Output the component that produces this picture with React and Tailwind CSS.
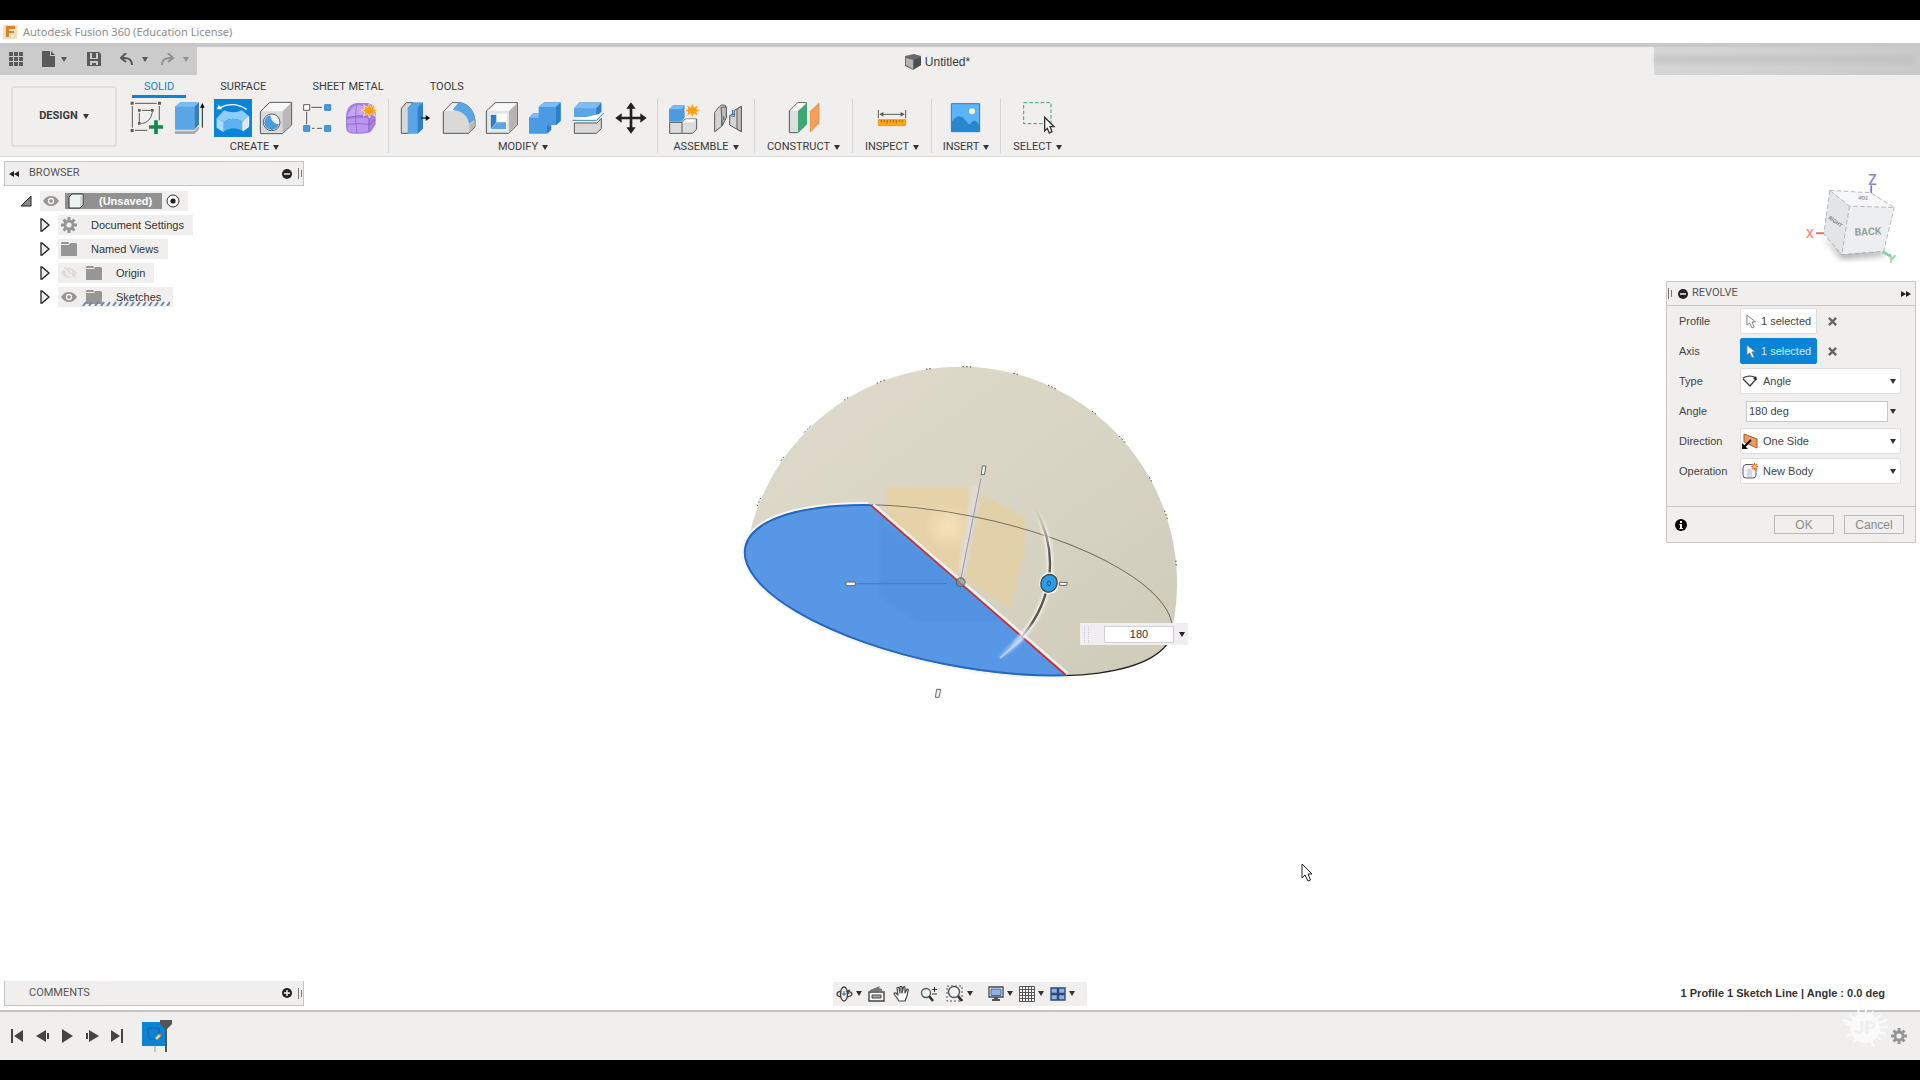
import React, { useState } from 'react'

const Caret = ({ className = 'fill-[#333]' }) => (
  <svg viewBox="0 0 6 5" className={`h-[5px] w-[6px] shrink-0 ${className}`}>
    <path d="M0 0H6L3 5Z" />
  </svg>
)

const star = 'M79 12L84 25L97 17L92 30L104 34L92 39L97 52L84 44L79 57L74 44L61 52L66 39L54 34L66 30L61 17L74 25Z'
const dark = '#5a5a5a'

const icons = {
  sketch: (
    <g fill="none" stroke={dark} strokeWidth="3">
      <path d="M21 13H86M13 21V86M94 21V64M21 94H58" />
      <path d="M34 42V70M42 34H70M73 40Q68 70 40 74" />
      <path fill={dark} stroke="none" d="M8 8h9v9H8zM90 8h9v9h-9zM8 90h9v9H8zM30 30h8v8h-8zM69 30h8v8h-8zM30 69h8v8h-8z" />
      <path stroke="#128a4b" strokeWidth="11" d="M84 64V105M63 84H105" />
    </g>
  ),
  extrude: (
    <g>
      <path fill="#a9a9a9" d="M12 96L68 96L84 80V91L70 105H12Z" />
      <path fill="#e0e0e0" d="M12 93H68L84 77V82L69 97H12Z" />
      <path fill="#5aa5e6" d="M12 23L28 10H84L70 23V92H12Z" />
      <path fill="#7bbcf5" d="M12 23L28 10H84L70 23Z" />
      <path fill="#2f7fc6" d="M70 23L84 10V76L70 92Z" />
      <path stroke="#222" strokeWidth="3" d="M94 86V22" />
      <path d="M94 12L101 26H87Z" />
    </g>
  ),
  revolve: (
    <g>
      <path fill="#0a84d6" d="M0 0H114V114H0Z" />
      <path fill="#8dccfb" d="M8 58L30 34Q57 46 84 34L105 52L87 68Q57 50 28 68Z" />
      <path fill="#5fb2f2" d="M8 58L28 68Q57 50 87 68V96Q57 78 28 99L8 86Z" />
      <path fill="#a9dbff" d="M8 58L28 68V99L8 86Z" />
      <path fill="#dfe8ee" stroke="#fff" strokeWidth="3" d="M87 70L104 53V83L87 96Z" />
      <path fill="none" stroke="#fff" strokeWidth="4" d="M98 31Q58 5 16 27" />
      <path fill="#fff" d="M8 31L14 17L25 31Z" />
    </g>
  ),
  hole: (
    <g>
      <path fill="#d9d9d9" stroke={dark} strokeWidth="3" strokeLinejoin="round" d="M10 38L38 10H104V78L76 104H10Z" />
      <path fill="#f7f7f7" d="M14 37L39 12H101L76 37Z" />
      <path fill="#b9b9b9" d="M77 38L102 13V77L77 102Z" />
      <circle cx="44" cy="70" r="25" fill="#f8f8f8" stroke={dark} strokeWidth="3" />
      <path fill="#4b9be2" d="M40 49A22 22 0 1 0 65 76Q44 74 40 49Z" />
    </g>
  ),
  pattern: (
    <g stroke={dark} strokeWidth="3">
      <path d="M34 25H66M20 38V76M36 88H44M51 88H66" />
      <path fill="#fff" d="M11 17H29V34H11Z" />
      <path fill="#4b9be2" stroke="#3187d4" d="M74 17H92V34H74ZM11 80H29V97H11ZM74 80H92V97H74Z" />
    </g>
  ),
  form: (
    <g>
      <path fill="#a77fe0" d="M9 56Q9 18 40 12H78Q98 20 98 48V76L84 98Q70 105 30 104Q9 103 9 84Z" />
      <path fill="#c5a5f2" d="M13 52Q20 26 44 18L78 24L74 46Q44 50 13 54Z" />
      <path fill="#bb98ee" d="M12 62Q44 55 74 58L76 96Q40 106 16 96Z" />
      <path fill="none" stroke="#7f5cc0" strokeWidth="2" d="M10 56Q44 46 78 54L98 38M42 16Q34 50 42 104M78 50V98M12 76Q44 72 78 76L98 62" />
      <path fill="#ff9f0a" stroke="#f0efee" strokeWidth="2" d={star} />
    </g>
  ),
  pressPull: (
    <g>
      <path fill="#d7d7d7" stroke={dark} strokeWidth="3" d="M13 28L28 11H48L34 28V103H13Z" />
      <path fill="#5aa5e6" d="M33 25L50 10H78V88L62 104H33Z" />
      <path fill="#2f7fc6" d="M62 25L78 10V88L62 104Z" />
      <path stroke="#222" strokeWidth="4" d="M72 57H90" />
      <path d="M99 57L86 48V66Z" />
    </g>
  ),
  fillet: (
    <g>
      <path fill="#d9d9d9" stroke={dark} strokeWidth="3" d="M10 38L36 11H62Q100 20 105 64V84L86 103H10Z" />
      <path fill="#f4f4f4" d="M14 36L37 13H57L42 36Z" />
      <path fill="#5aa5e6" d="M38 32L56 10Q101 18 105 62L87 74Q82 38 38 32Z" />
      <path fill="#b9b9b9" d="M88 76L104 66V83L88 101Z" />
    </g>
  ),
  shell: (
    <g>
      <path fill="#e4e4e4" stroke={dark} strokeWidth="3" d="M10 36L37 11H103V78L77 103H10Z" />
      <path fill="#f8f8f8" d="M14 35L38 13H100L76 35Z" />
      <path fill="#b5b5b5" d="M78 37L102 14V77L78 101Z" />
      <path fill="#fff" d="M20 44H72V94H20Z" />
      <path fill="#2f7fc6" d="M23 47H40V70L23 91Z" />
      <path fill="#5aa5e6" d="M41 70H69V91H24Z" />
    </g>
  ),
  combine: (
    <g>
      <path fill="#4b9be2" d="M9 56L21 43H38V24L54 10H104V66L91 78H76V92L64 104H9Z" />
      <path fill="#7bbcf5" d="M39 24L54 11H103L90 24ZM10 56L21 44H38V56Z" />
      <path fill="#2f7fc6" d="M90 24L104 11V66L90 78ZM63 80H75V92L63 103Z" />
    </g>
  ),
  split: (
    <g>
      <path fill="#5aa5e6" d="M15 28L31 10H97V38L82 54H15Z" />
      <path fill="#7bbcf5" d="M16 28L31 11H96L82 28Z" />
      <path fill="#2f7fc6" d="M82 28L97 11V37L82 53Z" />
      <path fill="#fff" stroke="#3187d4" strokeWidth="3" d="M10 64H83L104 42" />
      <path fill="#d9d9d9" stroke={dark} strokeWidth="3" d="M16 72H84L97 58V89L82 103H16Z" />
    </g>
  ),
  move: (
    <g fill="#222">
      <path d="M53 26h8v62h-8zM26 53h62v8H26z" />
      <path d="M57 10L71 29H43ZM57 104L71 85H43ZM10 57L29 43V71ZM104 57L85 43V71Z" />
    </g>
  ),
  component: (
    <g>
      <path fill="#dcdcdc" stroke={dark} strokeWidth="3" d="M11 70H48L58 60H92V90L80 103H11ZM48 70V103" />
      <path fill="#fff" d="M50 70L60 61H90L80 70Z" />
      <path fill="#4b9be2" d="M9 31L21 19H56V56L46 68H9Z" />
      <path fill="#7bbcf5" d="M10 31L21 20H55L46 31Z" />
      <path fill="#ff9f0a" stroke="#f0efee" strokeWidth="2" d={star} />
    </g>
  ),
  joint: (
    <g fill="#d4d4d4" stroke={dark} strokeWidth="3">
      <path d="M17 40L32 22Q38 14 50 20L53 54L38 62V82L17 98Z" />
      <path fill="#bdbdbd" d="M36 25L40 80L52 56V24Z" />
      <path d="M97 22L76 34V52L62 50V78L72 84L97 98Z" />
      <path fill="#c2c2c2" d="M84 30L97 22V98L84 90Z" />
      <path stroke="#2f7fc6" strokeWidth="4" d="M44 52V64M71 32V48M65 46H76" />
    </g>
  ),
  construct: (
    <g>
      <path fill="#dedede" stroke={dark} strokeWidth="3" d="M13 36L38 11H64V76L38 101H13Z" />
      <path fill="#f8f8f8" d="M16 35L39 13H62L38 35Z" />
      <path fill="#3ba874" d="M39 37L66 12V74L39 101Z" />
      <path fill="#f2a05c" stroke="#d98238" strokeWidth="2" d="M76 37L102 12V73L76 99Z" />
    </g>
  ),
  inspect: (
    <g>
      <path stroke={dark} strokeWidth="3" d="M16 33V58M98 33V58M22 46H92" />
      <path fill={dark} d="M19 46L31 39V53ZM95 46L83 39V53Z" />
      <path fill="#ffa51e" stroke="#e08a00" strokeWidth="2" d="M16 62H98V80H16Z" />
      <path stroke="#7a4a00" strokeWidth="2" d="M25 63V70M34 63V70M43 63V73M52 63V70M61 63V70M70 63V73M79 63V70M88 63V70" />
    </g>
  ),
  insert: (
    <g>
      <path fill="#5cb4f8" stroke="#2a7dc2" strokeWidth="3" d="M13 14H98V98H13Z" />
      <path fill="#2a86cc" d="M14 68Q38 34 60 70Q66 80 72 72Q84 56 97 78V97H14Z" />
      <circle cx="75" cy="37" r="9" fill="#f7f4cf" />
    </g>
  ),
  select: (
    <g>
      <path fill="none" stroke="#3ba874" strokeWidth="3" strokeDasharray="11 6" d="M14 11H96V74H14Z" />
      <path fill="#fff" stroke="#333" strokeWidth="4" d="M77 55L105 83H93L99 98L91 102L85 88L77 96Z" />
    </g>
  ),
}

const groups = [
  { label: 'CREATE', width: 'w-[265px] border-r pr-[3px]', tools: ['sketch', 'extrude', 'revolve', 'hole', 'pattern', 'form'] },
  { label: 'MODIFY', width: 'w-[269px] border-r', tools: ['pressPull', 'fillet', 'shell', 'combine', 'split', 'move'] },
  { label: 'ASSEMBLE', width: 'w-[97px] border-r', tools: ['component', 'joint'] },
  { label: 'CONSTRUCT', width: 'w-[98px] border-r', tools: ['construct'] },
  { label: 'INSPECT', width: 'w-[79px] border-r', tools: ['inspect'] },
  { label: 'INSERT', width: 'w-[69px] border-r', tools: ['insert'] },
  { label: 'SELECT', width: 'w-[73px]', tools: ['select'] },
]

const Gear = ({ className }) => (
  <svg viewBox="0 0 16 16" className={className}>
    <g stroke="currentColor" strokeWidth="3">
      <path d="M8 0V16M0 8H16M2.5 2.5L13.5 13.5M13.5 2.5L2.5 13.5" />
    </g>
    <circle cx="8" cy="8" r="5.5" fill="currentColor" />
    <circle cx="8" cy="8" r="2.6" fill="#f0efee" />
  </svg>
)

const Folder = () => (
  <svg viewBox="0 0 16 14" className="h-[14px] w-4 fill-[#969696]">
    <path d="M0 1Q0 0 1 0H7L8 1V2H0ZM0 3H8L9 1H15L16 2V14H0Z" />
  </svg>
)

const Eye = ({ off }) => (
  <svg viewBox="0 0 16 12" className={`h-3 w-4 ${off ? 'text-[#dcdcdc]' : 'text-[#969696]'}`}>
    <path fill="currentColor" d="M0 6Q3 1 8 1T16 6Q13 11 8 11T0 6Z" />
    <circle cx="8" cy="6" r="3.2" fill="#f0efee" />
    <circle cx="8" cy="6" r="1.8" fill="currentColor" />
    {off && <path stroke="#f0efee" strokeWidth="1.5" d="M1 0L14 12" />}
    {off && <path stroke="currentColor" strokeWidth="1.5" d="M3 0L15 11" />}
  </svg>
)

const Expand = () => (
  <button aria-label="Expand" className="w-[18px]">
    <svg viewBox="0 0 10 14" className="h-[14px] w-[10px]">
      <path fill="#eee" stroke="#222" strokeWidth="1.3" d="M1 1H2L9 7L2 13H1Z" />
    </svg>
  </button>
)

const Dot = ({ plus, className = '' }) => (
  <svg viewBox="0 0 10 10" className={`h-[10px] w-[10px] ${className}`}>
    <circle cx="5" cy="5" r="5" fill="#222" />
    <path stroke="#fff" strokeWidth="1.4" d={plus ? 'M2 5H8M5 2V8' : 'M2 5H8'} />
  </svg>
)

const Grip = () => (
  <span className="flex gap-[2px]">
    <i className="h-[11px] w-px bg-[#777]" />
    <i className="h-[7px] w-px self-center bg-[#777]" />
  </span>
)

function TitleBar() {
  return (
    <div className="flex h-[23px] items-center gap-[6px] bg-white pl-[3px]">
      <svg viewBox="0 0 14 14" className="h-[14px] w-[14px]">
        <path fill="#fbdcb4" d="M0 0H14V14H0Z" />
        <path fill="#d9822b" d="M3 1H12V4H6V6H11V8H6V12H3Z" />
        <path fill="#fff" d="M8 10H11V12H8Z" />
      </svg>
      <span className="pt-px font-['Noto_Sans','Open_Sans',sans-serif] text-[11px] text-[#8d8d8d]">Autodesk Fusion 360 (Education License)</span>
    </div>
  )
}

function QuickAccess() {
  return (
    <div className="flex h-7 w-[197px] items-center bg-[#cbcbcb] pb-1 pl-[9px] text-[#5a5a5a]">
      <button aria-label="Data panel">
        <svg viewBox="0 0 14 14" className="h-[14px] w-[14px] fill-current">
          <path d="M0 0h4v4H0zM5 0h4v4H5zM10 0h4v4h-4zM0 5h4v4H0zM5 5h4v4H5zM10 5h4v4h-4zM0 10h4v4H0zM5 10h4v4H5zM10 10h4v4h-4z" />
        </svg>
      </button>
      <button aria-label="File" className="ml-[19px] flex items-center gap-[6px]">
        <svg viewBox="0 0 13 16" className="h-4 w-[13px] fill-current"><path d="M0 0H8V5H13V16H0ZM9 0L13 4H9Z" /></svg>
        <Caret className="fill-[#5a5a5a]" />
      </button>
      <button aria-label="Save" className="ml-5">
        <svg viewBox="0 0 14 14" className="h-[14px] w-[14px]">
          <path fill="currentColor" d="M0 0H12L14 2V14H0Z" />
          <path fill="#cbcbcb" d="M3 1H5V6H9V1H11V7H3ZM3 9H11V13H9V11H5V13H3Z" />
        </svg>
      </button>
      <button aria-label="Undo" className="ml-[19px] flex items-center gap-[9px]">
        <svg viewBox="0 0 13 12" className="h-3 w-[13px]">
          <path fill="none" stroke="currentColor" strokeWidth="2" d="M6 0L1 5L6 9M2 5Q12 4 12 12" />
        </svg>
        <Caret className="fill-[#5a5a5a]" />
      </button>
      <button aria-label="Redo" className="ml-[13px] flex items-center gap-[9px] text-[#919191]">
        <svg viewBox="0 0 13 12" className="h-3 w-[13px]">
          <path fill="none" stroke="currentColor" strokeWidth="2" d="M7 0L12 5L7 9M11 5Q1 4 1 12" />
        </svg>
        <Caret className="fill-[#919191]" />
      </button>
    </div>
  )
}

function Toolbar() {
  const [tab, setTab] = useState('SOLID')

  return (
    <header className="border-t-4 border-b border-t-[#c8c8c8] border-b-[#dcdcdc] bg-[#f0efee] text-[#3a3a3a]">
      <div className="flex">
        <QuickAccess />
        <div className="flex flex-1 items-center justify-center gap-1 pt-px pl-6 text-[12px]">
          <svg viewBox="0 0 16 16" className="h-4 w-4">
            <path fill="#6a6a6a" d="M0 2L9 0L16 2V11L8 16L0 12Z" />
            <path fill="#b4b4b4" d="M1 4L8 6V15L1 11Z" />
            <path fill="#4c4c4c" d="M9 6L16 3V11L9 15Z" />
          </svg>
          <span>Untitled*</span>
        </div>
        <div className="h-7 w-[266px] bg-gradient-to-r from-[#d6d6d6] to-[#c9c9c9] pt-2 pr-1">
          <div className="h-[9px] bg-[#c0c0c0] opacity-60 blur-[2px]" />
        </div>
      </div>

      <div className="flex pb-[3px] pl-[11px]">
        <button className="mt-[11px] mr-[7px] flex h-[61px] w-[106px] items-center justify-center gap-[5px] rounded border-2 border-[#dedede] font-['Roboto',sans-serif] text-[11px] font-bold">
          DESIGN <Caret />
        </button>
        <div>
          <nav className="flex gap-[22px] pl-2 font-['Roboto',sans-serif] text-[11px] leading-4">
            {['SOLID', 'SURFACE', 'SHEET METAL', 'TOOLS'].map((t) => (
              <button
                key={t}
                onClick={() => setTab(t)}
                className={`border-b-[3px] px-3 pt-1 ${tab === t ? 'border-[#0a84d6] text-[#0a84d6]' : 'border-transparent'}`}
              >
                {t}
              </button>
            ))}
          </nav>
          <div className="mt-px flex">
            {groups.map((g) => (
              <div key={g.label} className={`flex h-[54px] flex-col items-center border-[#d4d4d4] ${g.width}`}>
                <div className="flex gap-[5px]">
                  {g.tools.map((t) => (
                    <button key={t} aria-label={t}>
                      <svg viewBox="0 0 114 114" className="h-[38px] w-[38px]">{icons[t]}</svg>
                    </button>
                  ))}
                </div>
                <button className="mt-[2px] flex items-center gap-1 font-['Roboto',sans-serif] text-[11px] leading-4">
                  {g.label} <Caret />
                </button>
              </div>
            ))}
          </div>
        </div>
      </div>
    </header>
  )
}

function Browser() {
  return (
    <aside className="w-[300px] text-[11px] text-[#333]">
      <div className="flex h-[25px] items-center border border-[#c4c4c4] bg-[#f0efee] pr-px pl-1 font-['Roboto',sans-serif] text-[#555]">
        <svg viewBox="0 0 10 6" className="h-[6px] w-[10px] fill-[#222]"><path d="M5 0V6L0 3ZM10 0V6L5 3Z" /></svg>
        <span className="ml-[10px] flex-1">BROWSER</span>
        <Dot className="mr-[6px]" />
        <Grip />
      </div>

      <ul className="mt-[5px] flex flex-col gap-1 pl-9">
        <li className="-ml-5 flex h-5 items-center">
          <svg viewBox="0 0 12 12" className="mr-2 h-3 w-3"><path fill="#888" stroke="#222" d="M11 1V11H1Z" /></svg>
          <div className="flex h-5 items-center bg-[#f0efee] pr-2 pl-[3px]">
            <Eye />
            <div className="ml-[6px] flex h-4 items-center bg-[#919191] pr-[10px] pl-[3px] font-bold text-white">
              <svg viewBox="0 0 16 16" className="mr-[15px] h-4 w-4">
                <path fill="#eef2f3" stroke="#333" d="M1 4L4 1H15V12L12 15H1Z" />
                <path fill="#cfd6d9" d="M12 4L14.5 1.5V12L12 14.5Z" />
              </svg>
              (Unsaved)
            </div>
            <svg viewBox="0 0 14 14" className="ml-1 h-[14px] w-[14px]">
              <circle cx="7" cy="7" r="6" fill="#fff" stroke="#333" />
              <circle cx="7" cy="7" r="2.6" fill="#222" />
            </svg>
          </div>
        </li>
        <li className="flex h-5 items-center">
          <Expand />
          <div className="flex h-5 items-center bg-[#f0efee] pr-[9px] pl-[3px]">
            <Gear className="h-4 w-4 text-[#969696]" />
            <span className="ml-[14px]">Document Settings</span>
          </div>
        </li>
        <li className="flex h-5 items-center">
          <Expand />
          <div className="flex h-5 items-center bg-[#f0efee] pr-[9px] pl-[3px]">
            <Folder />
            <span className="ml-[14px]">Named Views</span>
          </div>
        </li>
        <li className="flex h-5 items-center">
          <Expand />
          <div className="flex h-5 items-center bg-[#f0efee] pr-[9px] pl-[3px]">
            <Eye off />
            <span className="w-[9px]" />
            <Folder />
            <span className="ml-[14px]">Origin</span>
          </div>
        </li>
        <li className="flex h-5 items-center">
          <Expand />
          <div className="relative flex h-5 items-center bg-[#f0efee] pr-3 pl-[3px]">
            <Eye />
            <span className="w-[9px]" />
            <Folder />
            <span className="ml-[14px]">Sketches</span>
            <svg viewBox="0 0 88 5" className="absolute bottom-px left-6 h-[5px] w-[88px]">
              <path
                stroke="#6f86a4"
                strokeWidth="2"
                d="M1 5L4 1M7 5L10 1M13 5L16 1M19 5L22 1M25 5L28 1M31 5L34 1M37 5L40 1M43 5L46 1M49 5L52 1M55 5L58 1M61 5L64 1M67 5L70 1M73 5L76 1M79 5L82 1M85 5L88 1"
              />
            </svg>
          </div>
        </li>
      </ul>
    </aside>
  )
}

function ViewCube() {
  return (
    <svg viewBox="490 30 290 290" className="mt-[13px] mr-5 h-[97px] w-[97px] self-end">
      <defs>
        <filter id="cubeShadow"><feGaussianBlur stdDeviation="9" /></filter>
      </defs>
      <path fill="#777" opacity=".6" filter="url(#cubeShadow)" d="M550 230L606 296L730 286L735 270L606 270Z" />
      <path stroke="#7b6fd6" strokeWidth="5" d="M694 76V100" />
      <path stroke="#f26d63" strokeWidth="6" d="M529 219H556" />
      <path stroke="#7fd49b" strokeWidth="8" d="M728 274L752 288" />
      <path fill="#f6f7f8" d="M570 91L692 98L763 142L629 138Z" />
      <path fill="#e3e5e7" d="M570 91L629 138L606 283L552 221Z" />
      <path fill="#eceef0" d="M629 138L763 142L731 273L606 283Z" />
      <path
        fill="none"
        stroke="#9a9a9a"
        strokeWidth="2"
        strokeDasharray="14 7"
        d="M570 91L692 98L763 142L629 138ZM570 91L552 221L606 283L731 273L763 142M629 138L606 283"
      />
      <g fontFamily="Roboto, sans-serif">
        <text x="644" y="225" fontSize="31" fontWeight="700" fill="#98a19f" transform="rotate(-3 682 212)">BACK</text>
        <text x="565" y="175" fontSize="16" fontWeight="700" fill="#7d8587" transform="rotate(36 565 175)">RIGHT</text>
        <text x="686" y="108" fontSize="16" fontWeight="700" fill="#8d9494" transform="rotate(184 686 108)">TOP</text>
        <text x="498" y="234" fontSize="40" fontWeight="500" fill="#f2938b">X</text>
        <text x="685" y="74" fontSize="42" fontWeight="500" fill="#8f84dc">Z</text>
        <text x="744" y="308" fontSize="36" fontWeight="500" fill="#7fd49b" transform="rotate(14 756 296)">Y</text>
      </g>
    </svg>
  )
}

const Pointer = ({ fill }) => (
  <svg viewBox="0 0 12 16" className="h-[15px] w-[11px]">
    <path fill={fill} stroke="#777" d="M1 1V12L4 9.5L6.5 15L9 14L6.5 8.5H10.5Z" />
  </svg>
)

const typeIcon = (
  <svg viewBox="0 0 16 12" className="h-3 w-4">
    <path fill="none" stroke="#333" strokeWidth="1.2" d="M1 4L8 11L14 4M1 3Q8 -1 14 3" />
    <path fill="#222" d="M15 5L11 4L14 1Z" />
  </svg>
)

const directionIcon = (
  <svg viewBox="0 0 16 16" className="h-4 w-4">
    <path fill="#f09a5e" stroke="#a85a24" d="M2 1L15 6V15L2 9Z" />
    <path stroke="#000" strokeWidth="1.8" d="M2 14L9 7" />
    <path d="M0 16V10L6 16Z" />
  </svg>
)

const operationIcon = (
  <svg viewBox="0 0 16 16" className="h-4 w-4">
    <path fill="#f5f7fb" stroke="#555b6b" d="M1 5Q1 2 4 1.5H11L14 5V12Q14 15 11 15H4Q1 15 1 12Z" />
    <path fill="#d4d9e4" d="M5 6H10V14H5Z" />
    <path stroke="#e0661a" strokeWidth="1.2" d="M12.5 0V7M9 3.5H16M10 1L15 6M15 1L10 6" />
    <circle cx="12.5" cy="3.5" r="1.5" fill="#ffd34d" />
  </svg>
)

function SelectRow({ id, label, icon, options }) {
  return (
    <div className="flex h-[30px] items-center">
      <label htmlFor={id} className="w-[61px]">{label}</label>
      <div className="relative h-[26px] w-[161px]">
        <select id={id} className="h-full w-full appearance-none rounded-xs border border-[#dedede] bg-white pl-[22px]">
          {options.map((o) => <option key={o}>{o}</option>)}
        </select>
        <span className="pointer-events-none absolute inset-y-0 left-[2px] flex items-center">{icon}</span>
        <span className="pointer-events-none absolute inset-y-0 right-[5px] flex items-center"><Caret /></span>
      </div>
    </div>
  )
}

function RevolvePanel() {
  const [angle, setAngle] = useState('180 deg')

  return (
    <section className="mt-[14px] mr-1 w-[250px] border border-[#c8c8c8] bg-[#f0efee] text-[11px] text-[#444]">
      <div className="flex h-6 items-center border-b border-[#c8c8c8] pr-1 pl-px font-['Roboto',sans-serif] text-[#555]">
        <Grip />
        <Dot className="ml-[6px]" />
        <span className="ml-1 flex-1">REVOLVE</span>
        <svg viewBox="0 0 10 6" className="h-[6px] w-[10px] fill-[#222]"><path d="M0 0V6L5 3ZM5 0V6L10 3Z" /></svg>
      </div>

      <div className="pb-5 pl-3">
        {['Profile', 'Axis'].map((name) => {
          const active = name === 'Axis'
          return (
            <div key={name} className="flex h-[30px] items-center">
              <span className="w-[61px]">{name}</span>
              <button className={`flex h-[26px] w-[77px] items-center gap-1 rounded-xs border pl-[5px] ${active ? 'border-[#0a84d6] bg-[#0a84d6] text-[#d5ecfc]' : 'border-[#dedede] bg-white'}`}>
                <Pointer fill={active ? '#eaf5fd' : '#fff'} />
                1 selected
              </button>
              <button aria-label={`Clear ${name}`} className="ml-[11px]">
                <svg viewBox="0 0 10 10" className="h-[9px] w-[9px]"><path stroke="#666" strokeWidth="2.6" d="M1 1L9 9M9 1L1 9" /></svg>
              </button>
            </div>
          )
        })}
        <SelectRow id="type" label="Type" icon={typeIcon} options={['Angle', 'To', 'All']} />
        <div className="flex h-[30px] items-center">
          <label htmlFor="angle" className="w-[67px]">Angle</label>
          <input id="angle" value={angle} onChange={(e) => setAngle(e.target.value)} className="h-[21px] w-[142px] border border-[#c8c8c8] bg-white px-[2px]" />
          <span className="ml-[2px] flex"><Caret /></span>
        </div>
        <SelectRow id="direction" label="Direction" icon={directionIcon} options={['One Side', 'Two Sides', 'Symmetric']} />
        <SelectRow id="operation" label="Operation" icon={operationIcon} options={['New Body', 'New Component']} />
      </div>

      <div className="flex h-9 items-center gap-[10px] border-t border-[#c8c8c8] pr-[11px] pl-2 text-[12px] text-[#8a8a8a]">
        <svg viewBox="0 0 12 12" className="mr-auto h-3 w-3">
          <circle cx="6" cy="6" r="6" />
          <path fill="#fff" d="M5 2h2v2H5zM4.5 5H7V9H8V10H4.5V9H5V6H4.5Z" />
        </svg>
        <button className="h-[19px] w-[60px] border border-[#b9b9b9] leading-none">OK</button>
        <button className="h-[19px] w-[60px] border border-[#b9b9b9] leading-none">Cancel</button>
      </div>
    </section>
  )
}

function Model() {
  const [angle, setAngle] = useState('180')

  return (
    <div className="absolute top-[193px] left-1/2 -translate-x-1/2">
      <svg viewBox="0 0 1440 1080" className="h-[360px] w-[480px]">
        <defs>
          <linearGradient id="dome" x1="0" y1="0" x2="1" y2="1">
            <stop offset="0" stopColor="#dfdacb" />
            <stop offset=".5" stopColor="#d9d5c5" />
            <stop offset="1" stopColor="#cfcbb9" />
          </linearGradient>
          <radialGradient id="glow">
            <stop offset="0" stopColor="#f5e2b8" />
            <stop offset="1" stopColor="#f5e2b8" stopOpacity="0" />
          </radialGradient>
          <linearGradient id="arc" x1="0" y1="0" x2="0" y2="1">
            <stop offset="0" stopColor="#777" stopOpacity="0" />
            <stop offset=".3" stopColor="#5b5648" />
            <stop offset=".75" stopColor="#5b5648" />
            <stop offset=".9" stopColor="#9cc4f5" stopOpacity="0" />
          </linearGradient>
          <linearGradient id="arcHalo" x1="0" y1="0" x2="0" y2="1">
            <stop offset="0" stopColor="#fff" stopOpacity="0" />
            <stop offset=".2" stopColor="#fff" stopOpacity=".8" />
            <stop offset=".85" stopColor="#fff" stopOpacity=".8" />
            <stop offset="1" stopColor="#fff" stopOpacity="0" />
          </linearGradient>
          <filter id="soft"><feGaussianBlur stdDeviation="5" /></filter>
          <clipPath id="frontSide"><path d="M0 71L1440 1326H0Z" /></clipPath>
          <clipPath id="backSide"><path d="M0 71L1037 975L1356 830L1440 0H0Z" /></clipPath>
          <clipPath id="rightSide"><path d="M1037 975L1355 826H1440V1080H1037Z" /></clipPath>
        </defs>

        <path fill="url(#dome)" d="M79 605A650 650 0 0 1 722 50A650 650 0 0 1 1358 830A653 226 11.43 0 1 1037 976L453 700Z" />
        <path fill="none" stroke="#222" strokeWidth="3" strokeDasharray="4 7 4 7 4 128 4 6 4 96" d="M112 468A650 650 0 0 1 722 50A650 650 0 0 1 1370 740" />

        <g filter="url(#soft)">
          <path fill="#e6d2a8" d="M500 412H745L735 640L700 676L500 508Z" />
          <path fill="#e2d0a9" d="M785 432L915 505L912 600L870 778L738 690Z" />
        </g>
        <circle cx="685" cy="530" r="75" fill="url(#glow)" />
        <path stroke="#e0dcd2" strokeWidth="20" filter="url(#soft)" d="M768 410L722 670" />

        <g clipPath="url(#backSide)">
          <ellipse cx="715" cy="721" rx="653" ry="226" fill="none" stroke="#77725f" strokeWidth="3" transform="rotate(11.43 715 721)" />
        </g>
        <g clipPath="url(#rightSide)">
          <ellipse cx="715" cy="721" rx="653" ry="226" fill="none" stroke="#222" strokeWidth="4" transform="rotate(11.43 715 721)" />
        </g>
        <g clipPath="url(#frontSide)">
          <ellipse cx="715" cy="721" rx="658" ry="231" fill="#5797e6" stroke="#f6f5f0" strokeWidth="8" transform="rotate(11.43 715 721)" />
          <ellipse cx="715" cy="721" rx="652" ry="225" fill="none" stroke="#2468c0" strokeWidth="6" transform="rotate(11.43 715 721)" />
          <path fill="#5190dd" opacity=".6" filter="url(#soft)" d="M480 500L700 690L850 815H590L480 740Z" />
        </g>

        <path stroke="#f6f5f0" strokeWidth="7" d="M460 463L1043 970" />
        <path stroke="#de2226" strokeWidth="5" d="M453 466L1037 975" />
        <path stroke="#666" strokeWidth="3" strokeDasharray="10 9" d="M625 615L830 794" />
        <path stroke="#9a96b8" strokeWidth="3" d="M783 385L722 690" />
        <path stroke="#4079cf" strokeWidth="3" d="M410 701H680" />
        <circle cx="722" cy="697" r="13" fill="#8d8f94" stroke="#555" strokeWidth="4" opacity=".7" />

        <path fill="none" stroke="url(#arcHalo)" strokeWidth="16" filter="url(#soft)" d="M945 475C1015 600 1020 780 835 928" />
        <path fill="none" stroke="url(#arc)" strokeWidth="7" d="M945 475C1015 600 1020 780 835 928" />
        <path stroke="#cfe2fa" strokeWidth="6" opacity=".7" d="M905 868L840 924" />
        <ellipse cx="987" cy="700" rx="24" ry="27" fill="#2c9ce4" stroke="#f2efe6" strokeWidth="12" />
        <ellipse cx="987" cy="700" rx="24" ry="27" fill="#2c9ce4" stroke="#444" strokeWidth="4" transform="rotate(25 987 700)" />
        <ellipse cx="987" cy="700" rx="5" ry="7" fill="none" stroke="#1b5b8c" strokeWidth="3" />

        <g fill="#f7f6ee" stroke="#666" strokeWidth="3">
          <path d="M787 348H798L793 374H784Z" />
          <path d="M378 696H406V707H378Z" />
          <path d="M1018 697H1042L1040 706H1018Z" />
          <path d="M650 1018H662L657 1042H646Z" />
        </g>
      </svg>
      <div className="absolute top-[273px] left-[360px] flex h-[22px] w-[108px] items-center bg-[#f0eef0]">
        <span className="ml-1 h-[17px] w-[5px] border-r border-l border-dotted border-[#ccc]" />
        <input
          aria-label="Revolve angle"
          value={angle}
          onChange={(e) => setAngle(e.target.value)}
          className="ml-[15px] h-[17px] w-[70px] border border-[#d0d0d8] bg-white text-center text-[11px] text-[#333]"
        />
        <span className="ml-[5px] flex"><Caret className="fill-[#222]" /></span>
      </div>
    </div>
  )
}

function NavBar() {
  const btn = 'flex items-center gap-[3px]'
  return (
    <div className="flex h-6 w-[254px] items-center bg-[#f0efee] pl-[3px]">
      <button aria-label="Orbit" className={btn}>
        <svg viewBox="0 0 17 16" className="h-4 w-[17px]">
          <g fill="none" stroke="#444" strokeWidth="1.3">
            <ellipse cx="8" cy="8" rx="3.5" ry="7" />
            <path d="M5 5Q1 6 1 8T5 11M11 5Q16 6 16 8T11 11M14 4L11 5L13 8" />
          </g>
          <path stroke="#2f5f9f" d="M8 5V10M5.5 8H10.5" />
        </svg>
        <Caret />
      </button>
      <button aria-label="Look at" className="ml-[6px]">
        <svg viewBox="0 0 17 16" className="h-4 w-[17px]">
          <path fill="#fff" stroke="#444" strokeWidth="1.4" d="M1 6H16V15H1Z" />
          <path fill="#aaa" stroke="#444" d="M4 9H13V12H4Z" />
          <path fill="#777" d="M2 4L12 0L11 2L14 3V5H2Z" />
        </svg>
      </button>
      <button aria-label="Pan" className="ml-2">
        <svg viewBox="0 0 17 17" className="h-[17px] w-[17px]">
          <path
            fill="#fff"
            stroke="#444"
            strokeWidth="1.2"
            strokeLinejoin="round"
            d="M6 16L4 13L1 9Q1 7.5 3 8L5 10L4 3Q5 1.5 6 3L7 8V2Q8 .5 9 2V8L10.5 2Q12 1 12 3V8L14 4Q16 4 15 6L14 11L12 16Z"
          />
        </svg>
      </button>
      <button aria-label="Zoom" className="ml-[10px]">
        <svg viewBox="0 0 17 16" className="h-4 w-[17px]">
          <circle cx="6" cy="7" r="4.5" fill="#eef6f8" stroke="#555" strokeWidth="1.3" />
          <path stroke="#333" strokeWidth="2.6" d="M9 10L13 15" />
          <path stroke="#333" d="M12 3.5H17M14.5 1V6M12 8H17" />
        </svg>
      </button>
      <button aria-label="Zoom window" className={`${btn} ml-[9px]`}>
        <svg viewBox="0 0 18 17" className="h-[17px] w-[18px]">
          <path fill="none" stroke="#555" strokeDasharray="2 2" d="M1 1H16V16H1Z" />
          <circle cx="8" cy="7" r="5.5" fill="#eef6f8" stroke="#555" strokeWidth="1.4" />
          <path stroke="#333" strokeWidth="2.8" d="M12 11L16 16" />
        </svg>
        <Caret />
      </button>
      <button aria-label="Display settings" className={`${btn} ml-[15px]`}>
        <svg viewBox="0 0 16 15" className="h-[15px] w-4">
          <path fill="#fff" stroke="#444" strokeWidth="1.3" d="M1 1H15V11H1Z" />
          <path fill="#8fb1e3" stroke="#456ba5" d="M3 3H13V9.5H3Z" />
          <path fill="#555" d="M6 11H10V13H12V15H4V13H6Z" />
        </svg>
        <Caret />
      </button>
      <button aria-label="Grid and snaps" className={`${btn} ml-[6px]`}>
        <svg viewBox="0 0 16 16" className="h-4 w-4">
          <path fill="#fff" stroke="#555" d="M.5 .5H15.5V15.5H.5ZM3.5 0V16M6.5 0V16M9.5 0V16M12.5 0V16M0 3.5H16M0 6.5H16M0 9.5H16M0 12.5H16" />
        </svg>
        <Caret />
      </button>
      <button aria-label="Viewports" className={`${btn} ml-[6px]`}>
        <svg viewBox="0 0 16 14" className="h-[14px] w-4">
          <path fill="#8fb1e3" stroke="#2d4a75" strokeWidth="1.4" d="M1 1H7.5V6.5H1ZM8.5 1H15V6.5H8.5ZM1 7.5H7.5V13H1ZM8.5 7.5H15V13H8.5Z" />
        </svg>
        <Caret />
      </button>
    </div>
  )
}

const playback = [
  ['Go to start', 'M1 0V14M2 0', 'M12 1V13L3 7Z'],
  ['Step back', 'M12 4V10', 'M10 1V13L0 7Z'],
  ['Play', '', 'M1 0V14L12 7Z'],
  ['Step forward', 'M1 4V10', 'M3 1V13L13 7Z'],
  ['Go to end', 'M11 0V14', 'M0 1V13L9 7Z'],
]

function Timeline() {
  return (
    <footer className="relative flex h-[50px] items-center border-t-2 border-[#c4c4c4] bg-[#f0efee] pr-[13px] pl-[11px]">
      <div className="flex gap-3">
        {playback.map(([name, bar, tri]) => (
          <button key={name} aria-label={name}>
            <svg viewBox="0 0 13 14" className="h-[14px] w-[13px]">
              <path stroke="#444" strokeWidth="2" d={bar} />
              <path fill="#444" d={tri} />
            </svg>
          </button>
        ))}
      </div>
      <button aria-label="Sketch1" className="ml-[17px]">
        <svg viewBox="0 0 32 34" className="h-[34px] w-8">
          <path fill="#0a84d6" d="M1 3H25V27H1Z" />
          <path fill="none" stroke="#1d5f94" d="M7 9H18V20H9L7 18Z" />
          <path fill="#f6cf6b" d="M14 19L18 15L20 17L16 21Z" />
          <path fill="#e2574c" d="M18 15L19 14L21 16L20 17Z" />
          <path stroke="#c4c4c4" strokeWidth="2" d="M14 27V33" />
          <path fill="#555" d="M19 1H31V5L26 10V33H24V10L19 5Z" />
        </svg>
      </button>
      <button aria-label="Settings" className="ml-auto">
        <Gear className="h-4 w-4 text-[#969696]" />
      </button>
      <svg viewBox="0 0 48 40" className="absolute -top-1 right-[31px] h-10 w-12">
        <g stroke="#fafafa" strokeWidth="2">
          <path d="M24 20L2 12M24 20L4 16M24 20L8 6M24 20L17 2M24 20L25 1M24 20L32 3M24 20L40 7M24 20L46 12M24 20L47 19M24 20L45 26M24 20L40 32M24 20L33 39M24 20L12 35M24 20L6 28" />
        </g>
        <circle cx="24" cy="20" r="15" fill="#fafafa" />
        <text x="24" y="26" textAnchor="middle" fontFamily="Roboto, sans-serif" fontSize="18" fontWeight="700" fill="#efefef">JP</text>
      </svg>
    </footer>
  )
}

export default function App() {
  return (
    <div className="flex h-screen flex-col overflow-hidden border-y-[20px] border-black bg-white font-['Liberation_Sans',Arial,sans-serif]">
      <TitleBar />
      <Toolbar />

      <main className="relative flex flex-1 flex-col justify-between pt-1 pb-1">
        <Model />
        <svg viewBox="0 0 12 20" className="absolute top-[706px] left-[1301px] h-5 w-3">
          <path fill="#fff" stroke="#222" d="M1 1V15L4 12L7 18L9.5 17L7 11H11Z" />
        </svg>

        <div className="flex justify-between pl-1">
          <Browser />
          <div className="-mt-1 flex flex-col">
            <ViewCube />
            <RevolvePanel />
          </div>
        </div>

        <div className="grid grid-cols-[1fr_auto_1fr] items-center">
          <div className="ml-1 flex h-[25px] w-[300px] items-center border border-t-0 border-[#c4c4c4] bg-[#f0efee] pr-px pl-6 font-['Roboto',sans-serif] text-[11px] text-[#555]">
            <span className="flex-1">COMMENTS</span>
            <Dot plus className="mr-[6px]" />
            <Grip />
          </div>
          <NavBar />
          <p className="pr-[35px] text-right text-[11px] font-bold text-[#333]">1 Profile 1 Sketch Line | Angle : 0.0 deg</p>
        </div>
      </main>

      <Timeline />
    </div>
  )
}
